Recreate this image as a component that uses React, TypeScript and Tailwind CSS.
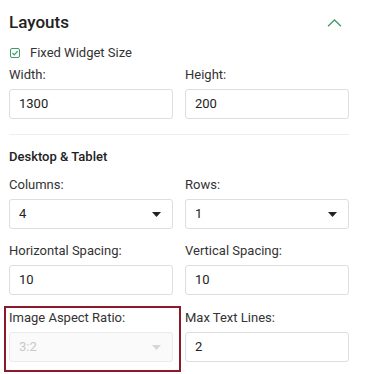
import React from "react";

const Caret = ({ light }: { light?: boolean }) => (
  <svg width="9" height="5" viewBox="0 0 9 5" className="absolute right-[11px] top-[12px]">
    <path d="M0 0 L9 0 L4.5 5 Z" fill={light ? "#d6d6d6" : "#222"} />
  </svg>
);

const Field = ({ label, value }: { label: string; value: string }) => (
  <div className="flex flex-col">
    <div className="text-[13px] leading-[18px] text-[#333] mb-[5px]">{label}</div>
    <div className="h-[30px] border border-[#dedede] rounded-[3px] flex items-center px-[9px] text-[13px] text-[#222] bg-white">
      {value}
    </div>
  </div>
);

const Select = ({ label, value, disabled }: { label: string; value: string; disabled?: boolean }) => (
  <div className="flex flex-col">
    <div className="text-[13px] leading-[18px] text-[#333] mb-[5px]">{label}</div>
    <div
      className={`relative h-[30px] border rounded-[3px] flex items-center px-[9px] text-[13px] ${
        disabled ? "border-[#ebebeb] bg-[#fafafa] text-[#c8c8c8]" : "border-[#dedede] bg-white text-[#222]"
      }`}
    >
      {value}
      <Caret light={disabled} />
    </div>
  </div>
);

export default function App() {
  return (
    <div
      className="w-[365px] h-[374px] bg-white relative overflow-hidden"
      style={{ fontFamily: "Roboto, 'Liberation Sans', sans-serif" }}
    >
      <div className="pl-[9px] pr-[16px] pt-[11px]">
        <div className="flex items-center justify-between h-[22px] w-[340px]">
          <div className="text-[17px] font-medium text-[#222] leading-[22px]">Layouts</div>
          <svg width="15" height="8" viewBox="0 0 15 8" className="mr-[7px] mt-[2px]">
            <path d="M1 7.3 L7.5 1 L14 7.3" fill="none" stroke="#3f9a6a" strokeWidth="1.3" />
          </svg>
        </div>
        <div className="flex items-center mt-[12px] h-[16px]">
          <div className="w-[10px] h-[10px] ml-[1px] border border-[#3f9a6a] rounded-[2px] flex items-center justify-center">
            <svg width="8" height="8" viewBox="0 0 8 8">
              <path d="M1.5 4 L3.3 5.8 L6.6 2.2" fill="none" stroke="#3f9a6a" strokeWidth="1.2" />
            </svg>
          </div>
          <span className="ml-[10px] text-[13px] text-[#333]">Fixed Widget Size</span>
        </div>
        <div className="grid grid-cols-2 gap-x-[12px] mt-[5px] w-[340px]">
          <Field label="Width:" value="1300" />
          <Field label="Height:" value="200" />
        </div>
        <div className="w-[340px] border-t border-[#eeeeee] mt-[15px]" />
        <div className="text-[13px] font-medium text-[#222] mt-[14px] leading-[16px]">Desktop &amp; Tablet</div>
        <div className="grid grid-cols-2 gap-x-[12px] mt-[11px] w-[340px]">
          <Select label="Columns:" value="4" />
          <Select label="Rows:" value="1" />
        </div>
        <div className="grid grid-cols-2 gap-x-[12px] mt-[13px] w-[340px]">
          <Field label="Horizontal Spacing:" value="10" />
          <Field label="Vertical Spacing:" value="10" />
        </div>
        <div className="grid grid-cols-2 gap-x-[12px] mt-[14px] w-[340px]">
          <div className="relative">
            <div className="absolute left-[-5px] top-[-3px] right-[-8px] bottom-[-10px] border-2 border-[#8b1a28] pointer-events-none" />
            <Select label="Image Aspect Ratio:" value="3:2" disabled />
          </div>
          <Field label="Max Text Lines:" value="2" />
        </div>
      </div>
    </div>
  );
}
